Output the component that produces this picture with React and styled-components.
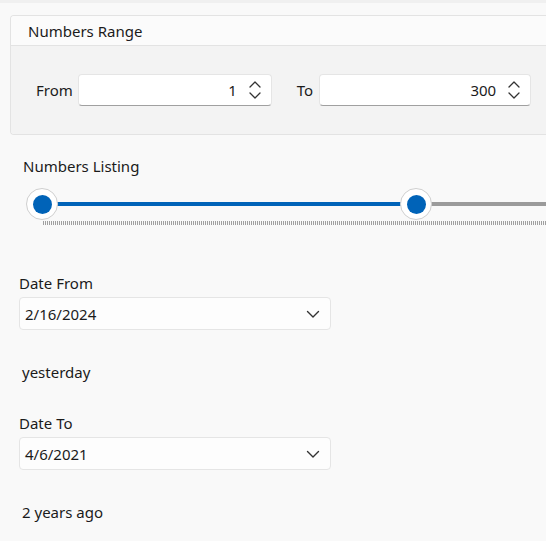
import React from "react";
import styled, { createGlobalStyle } from "styled-components";

const Global = createGlobalStyle`
  html, body { margin: 0; padding: 0; background: #f9f9f9; overflow: hidden; }
  body { font-family: "Noto Sans", "Open Sans", sans-serif; color: #1b1b1b; }
`;

const Page = styled.div`
  width: 546px;
  height: 541px;
  overflow: hidden;
  display: flex;
  flex-direction: column;
`;

const TopStrip = styled.div`
  height: 3px;
  background: #f0f0f0;
`;

const Expander = styled.section`
  margin: 12px 0 0 10px;
  border: 1px solid #e3e3e3;
  border-right: none;
  border-radius: 4px 0 0 4px;
  display: flex;
  flex-direction: column;
  overflow: hidden;
`;

const ExpanderHeader = styled.div`
  height: 29px;
  display: flex;
  align-items: center;
  padding-left: 17px;
  background: #fbfbfb;
  border-bottom: 1px solid #e3e3e3;
  font-size: 15px;
`;

const ExpanderBody = styled.div`
  height: 88px;
  background: #f3f3f3;
  display: flex;
  align-items: center;
  padding-left: 25px;
`;

const FieldLabel = styled.span`
  font-size: 15px;
  margin-right: ${(p) => p.$gap}px;
`;

const NumberBox = styled.div`
  width: ${(p) => p.$w}px;
  height: 32px;
  box-sizing: border-box;
  background: #ffffff;
  border: 1px solid #e5e5e5;
  border-bottom-color: #a0a0a0;
  border-radius: 4px;
  display: flex;
  align-items: center;
  justify-content: flex-end;
  padding-right: 9px;
  margin-right: ${(p) => p.$mr || 0}px;
  font-size: 15px;
`;

const NumberValue = styled.span`
  margin-right: 11px;
`;

const SpinIcon = () => (
  <svg width="14" height="22" viewBox="0 0 14 22" fill="none" stroke="#333" strokeWidth="1.3" strokeLinecap="round" strokeLinejoin="round">
    <path d="M2 8 L7 3 L12 8" />
    <path d="M2 14 L7 19 L12 14" />
  </svg>
);

const Section = styled.div`
  display: flex;
  flex-direction: column;
  padding-left: ${(p) => p.$pl}px;
  margin-top: ${(p) => p.$mt}px;
`;

const Label = styled.div`
  font-size: 15px;
  line-height: 20px;
`;

const SliderArea = styled.div`
  position: relative;
  height: 50px;
  margin-top: 3px;
  margin-left: 42px;
`;

const Track = styled.div`
  position: absolute;
  left: 0;
  right: -20px;
  top: 23px;
  height: 4px;
  background: #9b9b9b;
`;

const Fill = styled.div`
  position: absolute;
  left: 0;
  top: 23px;
  height: 4px;
  background: #0063b8;
`;

const Ticks = styled.div`
  position: absolute;
  left: 1px;
  right: 0;
  top: 42px;
  height: 4px;
  background: repeating-linear-gradient(to right, #a0a0a0 0 1px, transparent 1px 2px);
`;

const Thumb = styled.div`
  position: absolute;
  top: 9px;
  width: 32px;
  height: 32px;
  margin-left: -16px;
  box-sizing: border-box;
  border-radius: 50%;
  background: #ffffff;
  border: 1px solid #cfcfcf;
  display: flex;
  align-items: center;
  justify-content: center;
  &::after {
    content: "";
    width: 19px;
    height: 19px;
    border-radius: 50%;
    background: #0063b8;
  }
`;

const DateBox = styled.div`
  width: 312px;
  height: 33px;
  box-sizing: border-box;
  margin-top: 4px;
  background: #fdfdfd;
  border: 1px solid #e5e5e5;
  border-radius: 4px;
  display: flex;
  align-items: center;
  justify-content: space-between;
  padding: 0 10px 0 5px;
  font-size: 15px;
`;

const Relative = styled.div`
  font-size: 15px;
  margin-top: 32px;
  padding-left: 3px;
`;

const Chevron = () => (
  <svg width="14" height="10" viewBox="0 0 14 10" fill="none" stroke="#333" strokeWidth="1.4" strokeLinecap="round" strokeLinejoin="round">
    <path d="M1.5 2.5 L7 8 L12.5 2.5" />
  </svg>
);

const DateField = ({ label, value, relative, mt }) => (
  <Section $pl={19} $mt={mt}>
    <Label>{label}</Label>
    <DateBox>
      <span>{value}</span>
      <Chevron />
    </DateBox>
    <Relative>{relative}</Relative>
  </Section>
);

export default function App() {
  const lowPos = 0;
  const highPos = 374;
  return (
    <Page>
      <Global />
      <TopStrip />
      <Expander>
        <ExpanderHeader>Numbers Range</ExpanderHeader>
        <ExpanderBody>
          <FieldLabel $gap={5}>From</FieldLabel>
          <NumberBox $w={194} $mr={25}>
            <NumberValue>1</NumberValue>
            <SpinIcon />
          </NumberBox>
          <FieldLabel $gap={6}>To</FieldLabel>
          <NumberBox $w={212}>
            <NumberValue>300</NumberValue>
            <SpinIcon />
          </NumberBox>
        </ExpanderBody>
      </Expander>
      <Section $pl={23} $mt={21}>
        <Label>Numbers Listing</Label>
      </Section>
      <SliderArea>
        <Track />
        <Fill style={{ width: highPos - lowPos }} />
        <Ticks />
        <Thumb style={{ left: lowPos }} />
        <Thumb style={{ left: highPos }} />
      </SliderArea>
      <DateField label="Date From" value="2/16/2024" relative="yesterday" mt={44} />
      <DateField label="Date To" value="4/6/2021" relative="2 years ago" mt={31} />
    </Page>
  );
}
